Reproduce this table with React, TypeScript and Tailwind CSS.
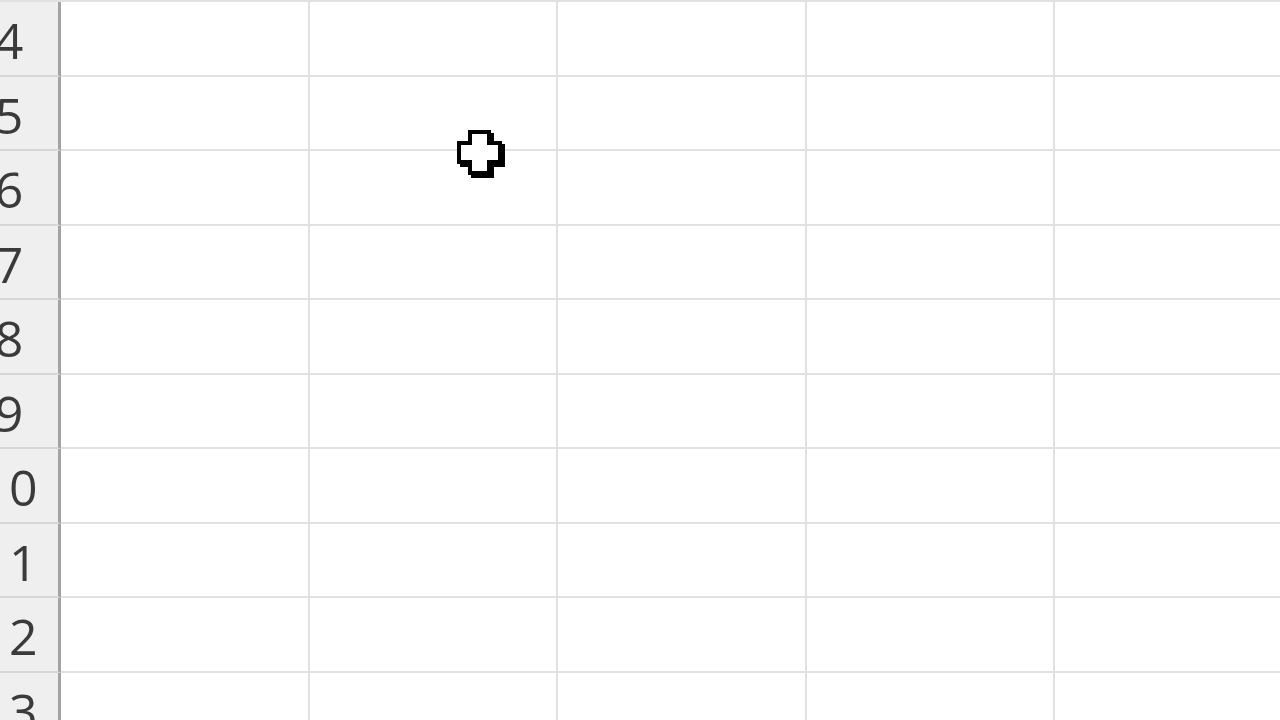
import React from "react";

const rows = [4, 5, 6, 7, 8, 9, 10, 11, 12, 13];
const cols = ["A", "B", "C", "D", "E"];

// white cross cell cursor, as Excel draws it
function CellCursor() {
  return (
    <svg
      className="absolute left-[457px] top-[130px] pointer-events-none"
      width="50"
      height="50"
      viewBox="0 0 50 50"
    >
      <polygon
        transform="translate(3 3)"
        fill="#000"
        points="11,0 34,0 34,11 45,11 45,34 34,34 34,45 11,45 11,34 0,34 0,11 11,11"
      />
      <polygon
        fill="#000"
        points="11,0 34,0 34,11 45,11 45,34 34,34 34,45 11,45 11,34 0,34 0,11 11,11"
      />
      <polygon
        fill="#fff"
        points="15,4 30,4 30,15 41,15 41,30 30,30 30,41 15,41 15,30 4,30 4,15 15,15"
      />
    </svg>
  );
}

export default function App() {
  return (
    <div className="relative w-[1280px] h-[720px] overflow-hidden bg-white">
      <div className="border-t-2 border-[#e1e1e1]">
        {rows.map((n) => (
          <div key={n} className="flex h-[74.5px]">
            {/* row header, mostly off screen to the left */}
            <div
              className="shrink-0 w-[101px] ml-[-40px] flex items-center justify-center pt-1 bg-[#efefef] border-r-[3px] border-r-[#a3a3a3] border-b-2 border-b-[#d6d6d6] text-[#3a3a3a] text-[50px] leading-none"
              style={{ fontFamily: '"Open Sans", "Liberation Sans", sans-serif' }}
            >
              {n}
            </div>
            {cols.map((c) => (
              <div
                key={c}
                className="shrink-0 w-[248.5px] border-r-2 border-b-2 border-[#e1e1e1]"
              />
            ))}
          </div>
        ))}
      </div>
      <CellCursor />
    </div>
  );
}
